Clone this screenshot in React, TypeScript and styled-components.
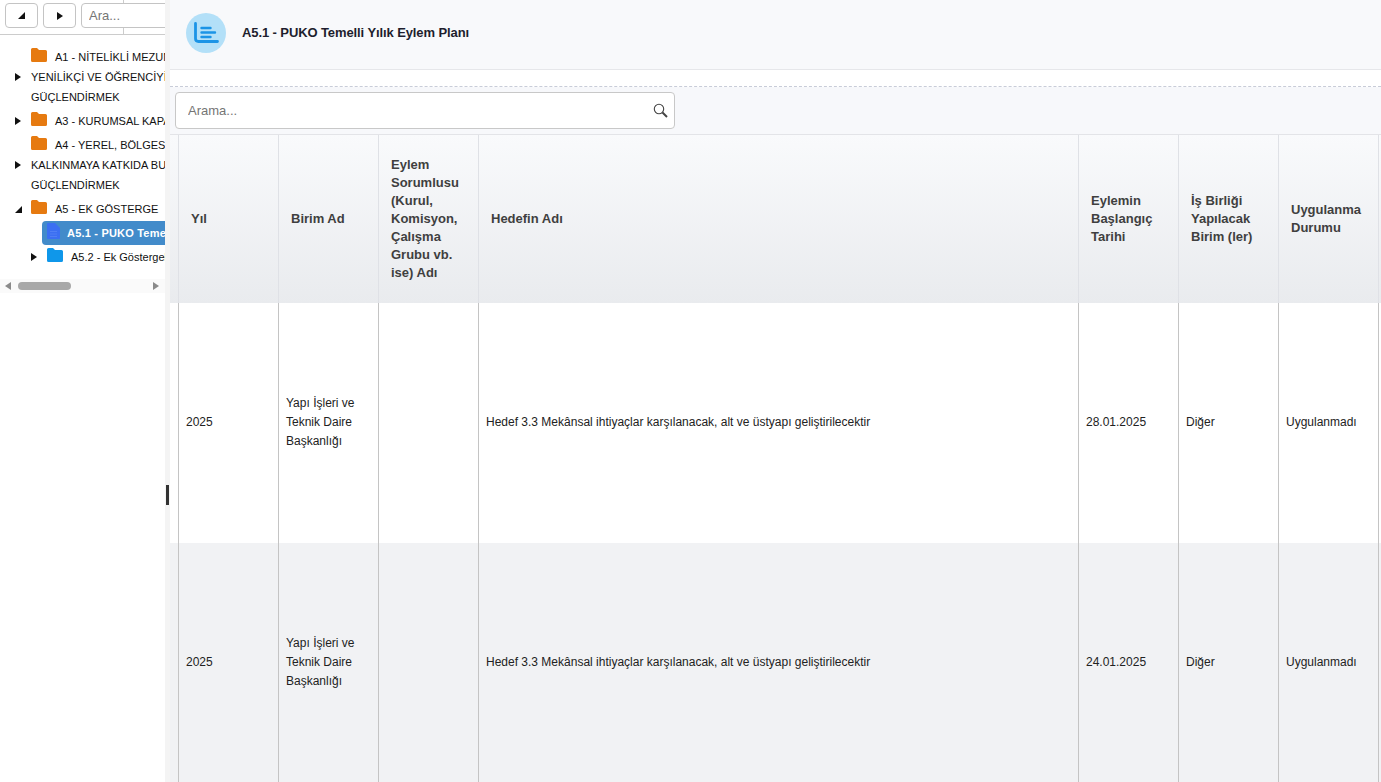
import { FC, ReactNode } from "react";

import styled, { createGlobalStyle } from "styled-components";

const columns = [
  { title: "Yıl", width: 100 },
  { title: "Birim Ad", width: 100 },
  { title: "Eylem Sorumlusu (Kurul, Komisyon, Çalışma Grubu vb. ise) Adı", width: 100 },
  { title: "Hedefin Adı", width: 600 },
  { title: "Eylemin Başlangıç Tarihi", width: 100 },
  { title: "İş Birliği Yapılacak Birim (ler)", width: 100 },
  { title: "Uygulanma Durumu", width: 100 },
];

const rows = [
  ["2025", "Yapı İşleri ve Teknik Daire Başkanlığı", "", "Hedef 3.3 Mekânsal ihtiyaçlar karşılanacak, alt ve üstyapı geliştirilecektir", "28.01.2025", "Diğer", "Uygulanmadı"],
  ["2025", "Yapı İşleri ve Teknik Daire Başkanlığı", "", "Hedef 3.3 Mekânsal ihtiyaçlar karşılanacak, alt ve üstyapı geliştirilecektir", "24.01.2025", "Diğer", "Uygulanmadı"],
];

const FolderIcon: FC<{ color: string }> = ({ color }) => (
  <svg width="16" height="14" viewBox="0 0 16 14">
    <path
      d="M1.5 0H6l2 2h6.5A1.5 1.5 0 0 1 16 3.5v9a1.5 1.5 0 0 1-1.5 1.5h-13A1.5 1.5 0 0 1 0 12.500v-11A1.500 1.500 0 0 1 1.500 0z"
      fill={color}
    />
  </svg>
);

const FileIcon: FC = () => (
  <svg width="13" height="16" viewBox="0 0 13 16">
    <path d="M1 0h7l5 5v10a1 1 0 0 1-1 1H1a1 1 0 0 1-1-1V1a1 1 0 0 1 1-1z" fill="#3b6ff2" />
    <path d="M3 8.500h7M3 11h7M3 13.500h7" stroke="#4f7ff4" strokeWidth="1" />
  </svg>
);

const Arrow: FC<{ open?: boolean }> = ({ open }) =>
  open ? (
    <svg width="7" height="7" viewBox="0 0 7 7">
      <path d="M7 0v7H0z" fill="#111" />
    </svg>
  ) : (
    <svg width="6" height="8" viewBox="0 0 6 8">
      <path d="M0 0l6 4-6 4z" fill="#111" />
    </svg>
  );

interface NodeProp {
  label: string;
  indent?: number;
  arrow?: "open" | "closed";
  icon?: ReactNode;
  selected?: boolean;
}

const TreeNode: FC<NodeProp> = ({ label, indent = 0, arrow, icon, selected }) => (
  <NodeRow $indent={indent}>
    <ArrowSlot>{arrow && <Arrow open={arrow === "open"} />}</ArrowSlot>
    <NodeBody $selected={selected}>
      <IconSlot $width={selected ? 20 : 24}>{icon}</IconSlot>
      <NodeLabel>{label}</NodeLabel>
    </NodeBody>
  </NodeRow>
);

const App: FC = () => {
  return (
    <Page>
      <GlobalStyle />

      <Sidebar>
        <TreeToolbar>
          <ToolbarButton>
            <Arrow open />
          </ToolbarButton>
          <ToolbarButton>
            <Arrow />
          </ToolbarButton>
          <TreeSearch placeholder="Ara..." />
        </TreeToolbar>

        <Tree>
          <TreeNode label="A1 - NİTELİKLİ MEZUNLAR" icon={<FolderIcon color="#e67a10" />} />
          <WrappedNode>
            <ArrowSlot>
              <Arrow />
            </ArrowSlot>
            <WrappedText>
              <div>YENİLİKÇİ VE ÖĞRENCİYİ MERKEZE ALAN</div>
              <div>GÜÇLENDİRMEK</div>
            </WrappedText>
          </WrappedNode>
          <TreeNode label="A3 - KURUMSAL KAPASİTE" arrow="closed" icon={<FolderIcon color="#e67a10" />} />
          <TreeNode label="A4 - YEREL, BÖLGESEL" icon={<FolderIcon color="#e67a10" />} />
          <WrappedNode>
            <ArrowSlot>
              <Arrow />
            </ArrowSlot>
            <WrappedText>
              <div>KALKINMAYA KATKIDA BULUNMA</div>
              <div>GÜÇLENDİRMEK</div>
            </WrappedText>
          </WrappedNode>
          <TreeNode label="A5 - EK GÖSTERGE" arrow="open" icon={<FolderIcon color="#e67a10" />} />
          <TreeNode label="A5.1 - PUKO Temelli Yılık Eylem Planı" indent={16} icon={<FileIcon />} selected />
          <TreeNode label="A5.2 - Ek Göstergeler" indent={16} arrow="closed" icon={<FolderIcon color="#0f97ea" />} />
        </Tree>

        <TreeScroll>
          <svg width="6" height="8" viewBox="0 0 6 8">
            <path d="M6 0L0 4l6 4z" fill="#8a8a8a" />
          </svg>
          <ScrollThumb />
          <svg width="6" height="8" viewBox="0 0 6 8">
            <path d="M0 0l6 4-6 4z" fill="#8a8a8a" />
          </svg>
        </TreeScroll>
      </Sidebar>

      <Splitter>
        <SplitHandle />
      </Splitter>

      <Main>
        <Header>
          <HeaderBadge>
            <svg width="26" height="24" viewBox="0 0 26 24" fill="none" stroke="#1b94e6" strokeLinecap="round">
              <path d="M2.500 2.500V17.500Q2.500 20.500 5.500 20.500H24.500" strokeWidth="2.800" />
              <path d="M8.500 7h9M8.500 11.500h13.500M8.500 16h9" strokeWidth="2.400" />
            </svg>
          </HeaderBadge>
          <HeaderTitle>A5.1 - PUKO Temelli Yılık Eylem Planı</HeaderTitle>
        </Header>

        <Band />

        <SearchBar>
          <SearchBox>
            <SearchInput placeholder="Arama..." />
            <SearchIcon width="15" height="15" viewBox="0 0 15 15" fill="none">
              <circle cx="6" cy="6" r="4.700" stroke="#444" strokeWidth="1.100" />
              <path d="M9.500 9.500l4.500 4.500" stroke="#444" strokeWidth="2" />
            </SearchIcon>
          </SearchBox>
        </SearchBar>

        <Table>
          <colgroup>
            <col width={9} />
            {columns.map((column) => (
              <col key={column.title} width={column.width} />
            ))}
            <col />
          </colgroup>
          <thead>
            <tr>
              <HeadCell />
              {columns.map((column) => (
                <HeadCell key={column.title}>{column.title}</HeadCell>
              ))}
              <HeadCell />
            </tr>
          </thead>
          <tbody>
            {rows.map((row, idx) => (
              <BodyRow key={idx} $striped={idx % 2 === 1}>
                <BodyCell />
                {row.map((value, cellIdx) => (
                  <BodyCell key={cellIdx}>{value}</BodyCell>
                ))}
                <BodyCell />
              </BodyRow>
            ))}
          </tbody>
        </Table>
      </Main>
    </Page>
  );
};

const GlobalStyle = createGlobalStyle`
  html, body {
    margin: 0;
    height: 100%;
    overflow: hidden;
    background: #fff;
    font-family: "Liberation Sans", Arial, sans-serif;
  }
`;

const Page = styled.div`
  display: flex;
  height: 782px;
  overflow: hidden;
`;

const Sidebar = styled.aside`
  width: 165px;
  flex-shrink: 0;
  overflow: hidden;
  background: #fff;
`;

const TreeToolbar = styled.div`
  display: flex;
  gap: 5px;
  height: 35px;
  box-sizing: border-box;
  padding: 3px 0 0 5px;
  border-bottom: 1px solid #ccc;
  background: linear-gradient(to right, #fff 123px, #ccc 123px, #ccc 124px, #fff 124px);
`;

const ToolbarButton = styled.div`
  display: flex;
  flex: 0 0 33px;
  align-items: center;
  justify-content: center;
  height: 25px;
  box-sizing: border-box;
  border: 1px solid #c4c4c4;
  border-radius: 4px;
  background: #fff;
`;

const TreeSearch = styled.input`
  flex: 0 0 120px;
  height: 25px;
  box-sizing: border-box;
  padding: 0 7px;
  border: 1px solid #c4c4c4;
  border-radius: 4px;
  outline: none;
  font-family: inherit;
  font-size: 13px;

  &::placeholder {
    color: #757575;
    opacity: 1;
  }
`;

const Tree = styled.div`
  padding-top: 10px;
  height: 235px;
  box-sizing: border-box;
`;

const NodeRow = styled.div<{ $indent: number }>`
  display: flex;
  align-items: center;
  height: 24px;
  padding-left: ${(props) => 15 + props.$indent}px;
  white-space: nowrap;
`;

const ArrowSlot = styled.span`
  display: flex;
  flex: 0 0 11px;
  align-items: center;
  height: 20px;
  margin-right: 5px;
`;

const NodeBody = styled.div<{ $selected?: boolean }>`
  display: flex;
  flex: 1;
  align-items: center;
  height: 24px;
  margin-left: ${(props) => (props.$selected ? "-5px" : "0")};
  padding-left: ${(props) => (props.$selected ? "5px" : "0")};
  border-radius: 4px 0 0 4px;
  background: ${(props) => (props.$selected ? "#428bca" : "transparent")};
  color: ${(props) => (props.$selected ? "#fff" : "#111")};
  font-weight: ${(props) => (props.$selected ? "bold" : "normal")};
  letter-spacing: ${(props) => (props.$selected ? "0.2px" : "0")};
`;

const IconSlot = styled.span<{ $width: number }>`
  display: flex;
  flex: 0 0 ${(props) => props.$width}px;
  align-items: center;
  margin-top: -5px;
`;

const NodeLabel = styled.span`
  font-size: 11px;
  line-height: 20px;
`;

const WrappedNode = styled.div`
  display: flex;
  margin-top: -2px;
  margin-bottom: 2px;
  padding-left: 15px;
  white-space: nowrap;
`;

const WrappedText = styled.div`
  color: #111;
  font-size: 11px;
  line-height: 20px;
`;

const TreeScroll = styled.div`
  display: flex;
  align-items: center;
  justify-content: space-between;
  height: 14px;
  margin-top: 9px;
  padding: 0 6px 0 5px;
  background: #fafafa;
`;

const ScrollThumb = styled.div`
  width: 53px;
  height: 8px;
  margin-right: auto;
  margin-left: 7px;
  border-radius: 4px;
  background: #a8a8a8;
`;

const Splitter = styled.div`
  position: relative;
  flex: 0 0 5px;
  background: #f4f4f4;
`;

const SplitHandle = styled.div`
  position: absolute;
  top: 485px;
  left: 1px;
  width: 3px;
  height: 20px;
  background: #333;
`;

const Main = styled.main`
  flex: 1;
  min-width: 0;
  background: #f7f8fb;
`;

const Header = styled.header`
  display: flex;
  gap: 16px;
  align-items: center;
  height: 70px;
  box-sizing: border-box;
  padding: 0 0 4px 16px;
  border-bottom: 1px solid #e6e7ea;
  background: #f8f9fb;
`;

const HeaderBadge = styled.div`
  display: flex;
  align-items: center;
  justify-content: center;
  width: 40px;
  height: 40px;
  border-radius: 50%;
  background: #b3e0f8;
`;

const HeaderTitle = styled.h1`
  margin: 0;
  color: #1e1e2d;
  font-size: 13px;
  font-weight: bold;
  letter-spacing: -0.1px;
`;

const Band = styled.div`
  height: 17px;
  box-sizing: border-box;
  border-bottom: 1px dashed #c8ccd8;
  background: #fff;
`;

const SearchBar = styled.div`
  height: 48px;
  box-sizing: border-box;
  padding: 5px 0 0 5px;
  border-bottom: 1px solid #e3e4e8;
`;

const SearchBox = styled.div`
  display: flex;
  align-items: center;
  width: 500px;
  height: 37px;
  box-sizing: border-box;
  padding: 0 6px 0 0;
  border: 1px solid #c8c8c8;
  border-radius: 4px;
  background: #fff;
`;

const SearchInput = styled.input`
  flex: 1;
  min-width: 0;
  padding: 0 12px;
  border: 0;
  outline: none;
  background: transparent;
  font-family: inherit;
  font-size: 13px;

  &::placeholder {
    color: #757575;
    opacity: 1;
  }
`;

const SearchIcon = styled.svg`
  flex-shrink: 0;
`;

const Table = styled.table`
  width: 100%;
  table-layout: fixed;
  border-collapse: separate;
  border-spacing: 0;
`;

const HeadCell = styled.th`
  height: 168px;
  box-sizing: border-box;
  padding: 0 12px;
  border-right: 1px solid #dfe1e6;
  background: linear-gradient(to bottom, #f9fafc, #e9ebee);
  color: #3f3f3f;
  font-size: 13px;
  font-weight: bold;
  line-height: 18px;
  text-align: left;

  &:first-child,
  &:last-child {
    padding: 0;
  }

  &:last-child {
    border-right: 0;
  }
`;

const BodyRow = styled.tr<{ $striped: boolean }>`
  background: ${(props) => (props.$striped ? "#f1f2f4" : "#fff")};
`;

const BodyCell = styled.td`
  height: 240px;
  box-sizing: border-box;
  padding: 0 7px 2px 7px;
  border-right: 1px solid #c4c4c4;
  color: #222;
  font-size: 12px;
  line-height: 19px;

  &:first-child,
  &:last-child {
    padding: 0;
  }

  &:last-child {
    border-right: 0;
  }
`;

export default App;
